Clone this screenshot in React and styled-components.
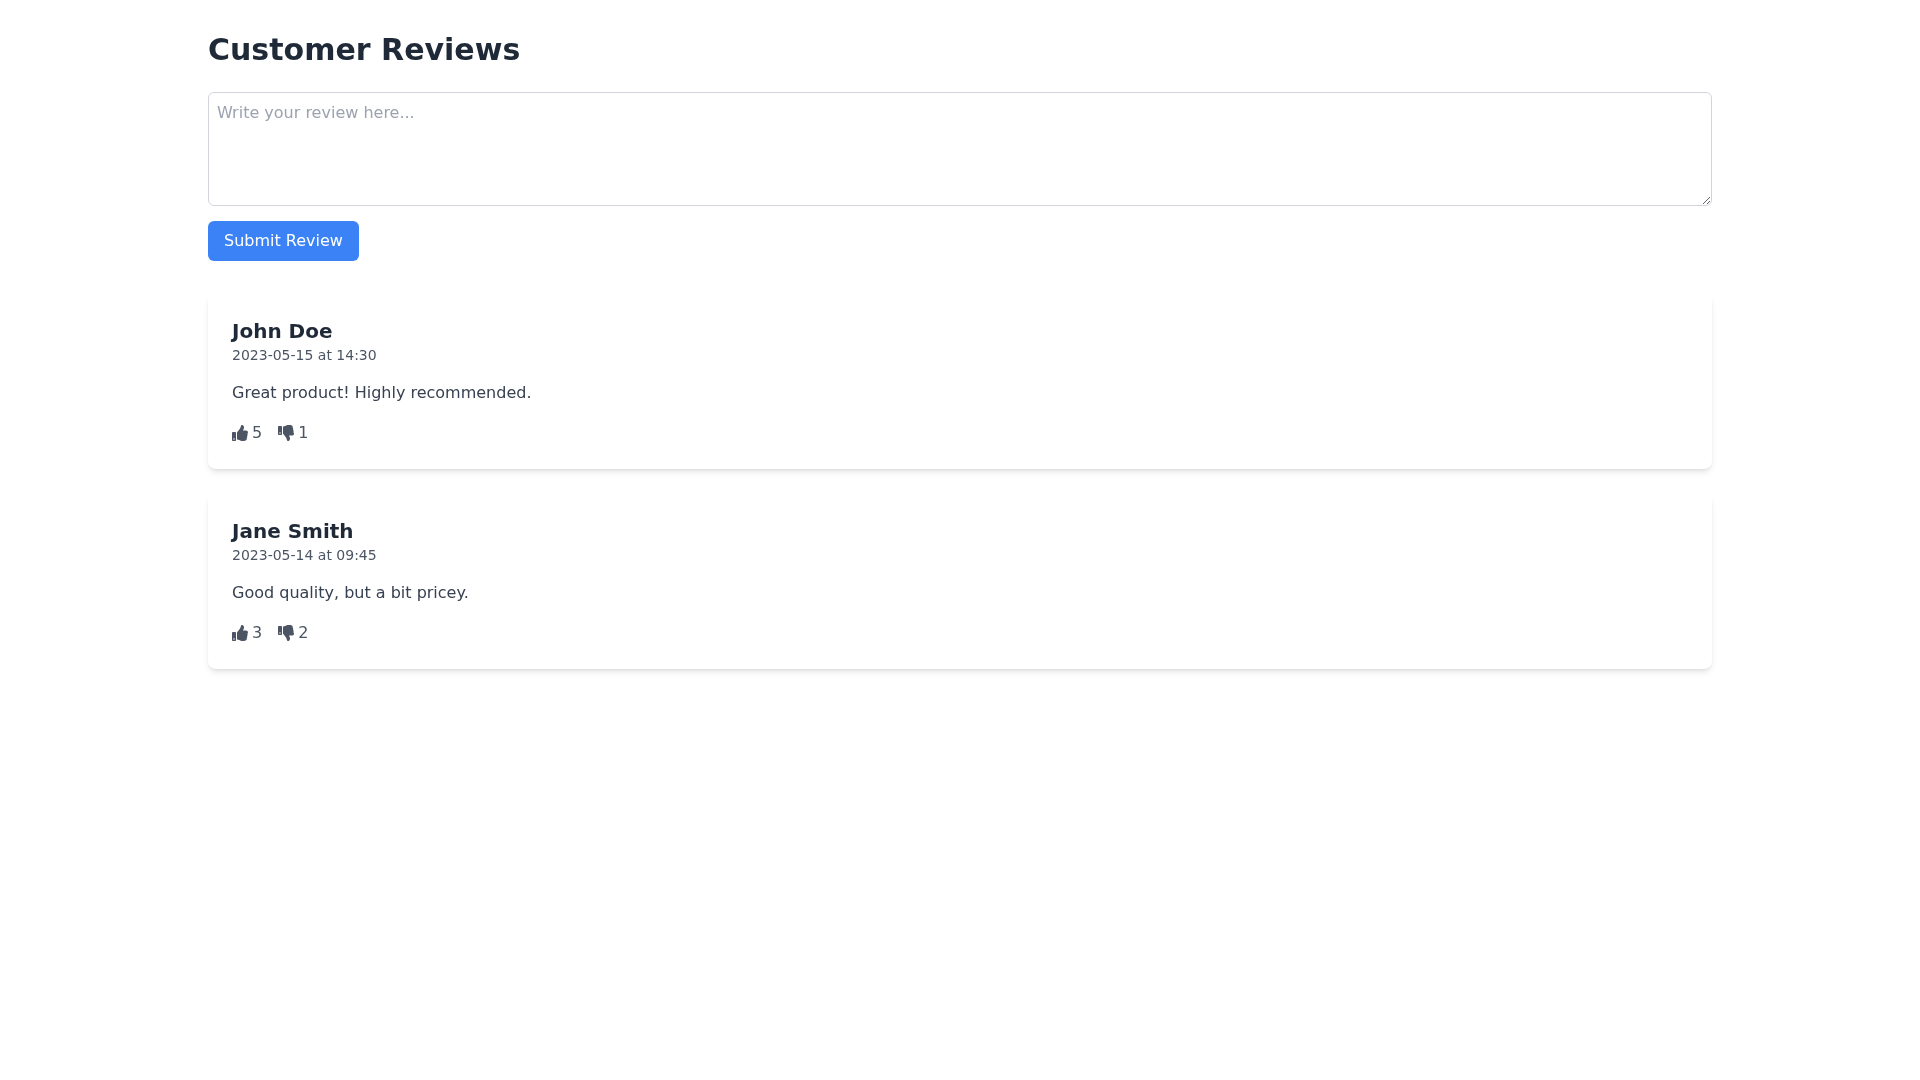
import React from 'react'
import styled, { createGlobalStyle } from 'styled-components'
import { FaThumbsUp, FaThumbsDown } from 'react-icons/fa'

const GlobalStyle = createGlobalStyle`
  * {
    box-sizing: border-box;
  }

  body {
    margin: 0;
    background-color: #ffffff;
    font-family: "DejaVu Sans", sans-serif;
    font-size: 16px;
    line-height: 24px;
    -webkit-font-smoothing: antialiased;
  }
`

const Page = styled.div`
  width: 100%;
  max-width: 1536px;
  margin: 0 auto;
  padding: 32px 16px;
  will-change: transform;
`

const Title = styled.h1`
  margin: 0 0 24px;
  font-size: 30px;
  line-height: 36px;
  font-weight: 700;
  color: #1f2937;
`

const ReviewForm = styled.form`
  display: flex;
  flex-direction: column;
  align-items: flex-start;
  gap: 15px;
  margin-bottom: 32px;
`

const ReviewInput = styled.textarea`
  display: block;
  width: 100%;
  padding: 8px;
  border: 1px solid #d1d5db;
  border-radius: 6px;
  outline: none;
  background-color: #ffffff;
  font-family: inherit;
  font-size: 16px;
  line-height: 24px;
  color: #1f2937;

  &::placeholder {
    color: #9ca3af;
    opacity: 1;
  }
`

const SubmitButton = styled.button`
  height: 40px;
  padding: 8px 16px;
  border: 0;
  border-radius: 6px;
  background-color: #3b82f6;
  color: #ffffff;
  font-family: inherit;
  font-size: 16px;
  line-height: 24px;
  cursor: pointer;
`

const ReviewList = styled.div`
  display: flex;
  flex-direction: column;
  gap: 24px;
`

const Card = styled.article`
  padding: 24px;
  border-radius: 8px;
  background-color: #ffffff;
  box-shadow: 0 4px 6px -1px rgba(0, 0, 0, 0.1), 0 2px 4px -2px rgba(0, 0, 0, 0.1);
`

const CardHeader = styled.header`
  margin-bottom: 16px;
`

const Author = styled.h3`
  margin: 0;
  font-size: 20px;
  line-height: 28px;
  font-weight: 600;
  color: #1f2937;
`

const Timestamp = styled.p`
  margin: 0;
  font-size: 14px;
  line-height: 20px;
  color: #4b5563;
`

const Comment = styled.p`
  margin: 0 0 16px;
  color: #374151;
`

const Votes = styled.div`
  display: flex;
  align-items: center;
  gap: 16px;
`

const VoteButton = styled.button`
  display: flex;
  align-items: center;
  gap: 4px;
  padding: 0;
  border: 0;
  background: none;
  color: #4b5563;
  font-family: inherit;
  font-size: 16px;
  line-height: 24px;
  cursor: pointer;
`

const reviews = [
  {
    author: 'John Doe',
    date: '2023-05-15 at 14:30',
    comment: 'Great product! Highly recommended.',
    likes: 5,
    dislikes: 1,
  },
  {
    author: 'Jane Smith',
    date: '2023-05-14 at 09:45',
    comment: 'Good quality, but a bit pricey.',
    likes: 3,
    dislikes: 2,
  },
]

export default function App() {
  return (
    <Page>
      <GlobalStyle />
      <Title>Customer Reviews</Title>
      <ReviewForm onSubmit={e => e.preventDefault()}>
        <ReviewInput rows={4} placeholder="Write your review here..." />
        <SubmitButton type="submit">Submit Review</SubmitButton>
      </ReviewForm>
      <ReviewList>
        {reviews.map(review => (
          <Card key={review.author}>
            <CardHeader>
              <Author>{review.author}</Author>
              <Timestamp>{review.date}</Timestamp>
            </CardHeader>
            <Comment>{review.comment}</Comment>
            <Votes>
              <VoteButton type="button">
                <FaThumbsUp size={16} />
                <span>{review.likes}</span>
              </VoteButton>
              <VoteButton type="button">
                <FaThumbsDown size={16} />
                <span>{review.dislikes}</span>
              </VoteButton>
            </Votes>
          </Card>
        ))}
      </ReviewList>
    </Page>
  )
}
